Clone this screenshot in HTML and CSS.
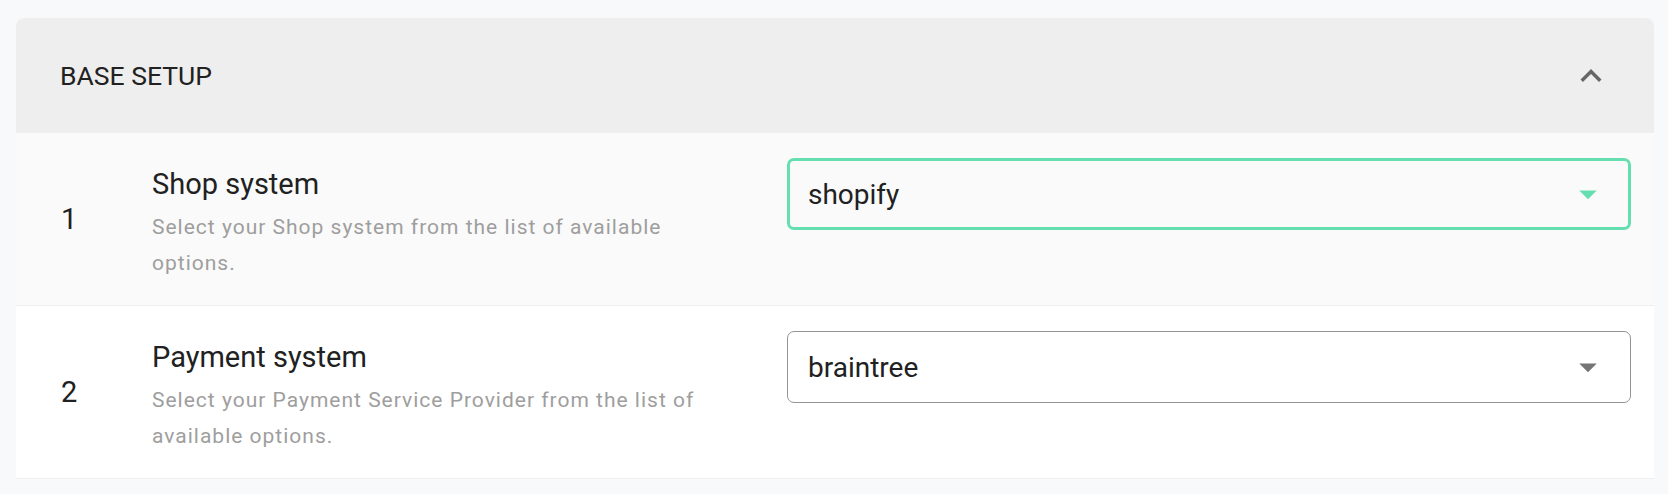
FILE: index.html
```html
<!DOCTYPE html>
<html lang="en">
<head>
<meta charset="utf-8">
<title>Base setup</title>
<link rel="stylesheet" href="styles.css">
</head>
<body>
<div class="card">
  <div class="card-header">
    <span class="card-title">BASE SETUP</span>
    <svg class="chevron" viewBox="0 0 24 24" width="42" height="42"><path d="M12 8l-6 6 1.41 1.41L12 10.83l4.59 4.58L18 14z" fill="#666666"/></svg>
  </div>
  <div class="row row-odd">
    <div class="num">1</div>
    <div class="text">
      <div class="heading">Shop system</div>
      <div class="desc">Select your Shop system from the list of available options.</div>
    </div>
    <div class="field">
      <div class="select select-focused">
        <span class="value">shopify</span>
        <svg class="arrow" viewBox="0 0 24 24" width="42" height="42"><path d="M7 10l5 5 5-5z" fill="#66dfb0"/></svg>
      </div>
    </div>
  </div>
  <div class="row">
    <div class="num">2</div>
    <div class="text">
      <div class="heading">Payment system</div>
      <div class="desc">Select your Payment Service Provider from the list of available options.</div>
    </div>
    <div class="field">
      <div class="select">
        <span class="value">braintree</span>
        <svg class="arrow" viewBox="0 0 24 24" width="42" height="42"><path d="M7 10l5 5 5-5z" fill="#757575"/></svg>
      </div>
    </div>
  </div>
</div>
</body>
</html>
```

FILE: styles.css
```css
html, body {
  margin: 0;
  padding: 0;
  background: #f8f9fb;
  font-family: Roboto, "Liberation Sans", sans-serif;
  color: #212121;
}

.card {
  margin: 18px 14px 0 16px;
  background: #ffffff;
  border-radius: 8px 8px 0 0;
  overflow: hidden;
}

.card-header {
  height: 115px;
  background: #eeeeee;
  display: flex;
  align-items: center;
  justify-content: space-between;
  padding: 0 42px 0 44px;
}

.card-title {
  font-size: 26.5px;
  font-weight: 400;
  color: #212121;
}

.chevron {
  display: block;
}

.row {
  height: 172px;
  display: flex;
  align-items: flex-start;
  background: #ffffff;
  border-bottom: 1px solid #eeeeee;
}

.row-odd {
  background: #fafafa;
}

.num {
  align-self: center;
  width: 91px;
  padding-left: 45px;
  font-size: 29px;
  line-height: 34px;
}

.text {
  width: 587px;
  padding-top: 34px;
}

.heading {
  font-size: 29px;
  line-height: 34px;
}

.desc {
  margin-top: 8px;
  font-size: 21px;
  line-height: 36px;
  letter-spacing: 1px;
  color: #9e9e9e;
}

.field {
  margin-left: 48px;
  width: 844px;
  padding-top: 25px;
}

.select {
  box-sizing: border-box;
  height: 72px;
  border: 1px solid #949494;
  border-radius: 7px;
  display: flex;
  align-items: center;
  justify-content: space-between;
  padding: 0 21px 0 20px;
}

.select-focused {
  border: 3px solid #66dfb0;
  padding: 0 19px 0 18px;
}

.value {
  font-size: 28px;
  color: #212121;
}

.arrow {
  display: block;
}
```
